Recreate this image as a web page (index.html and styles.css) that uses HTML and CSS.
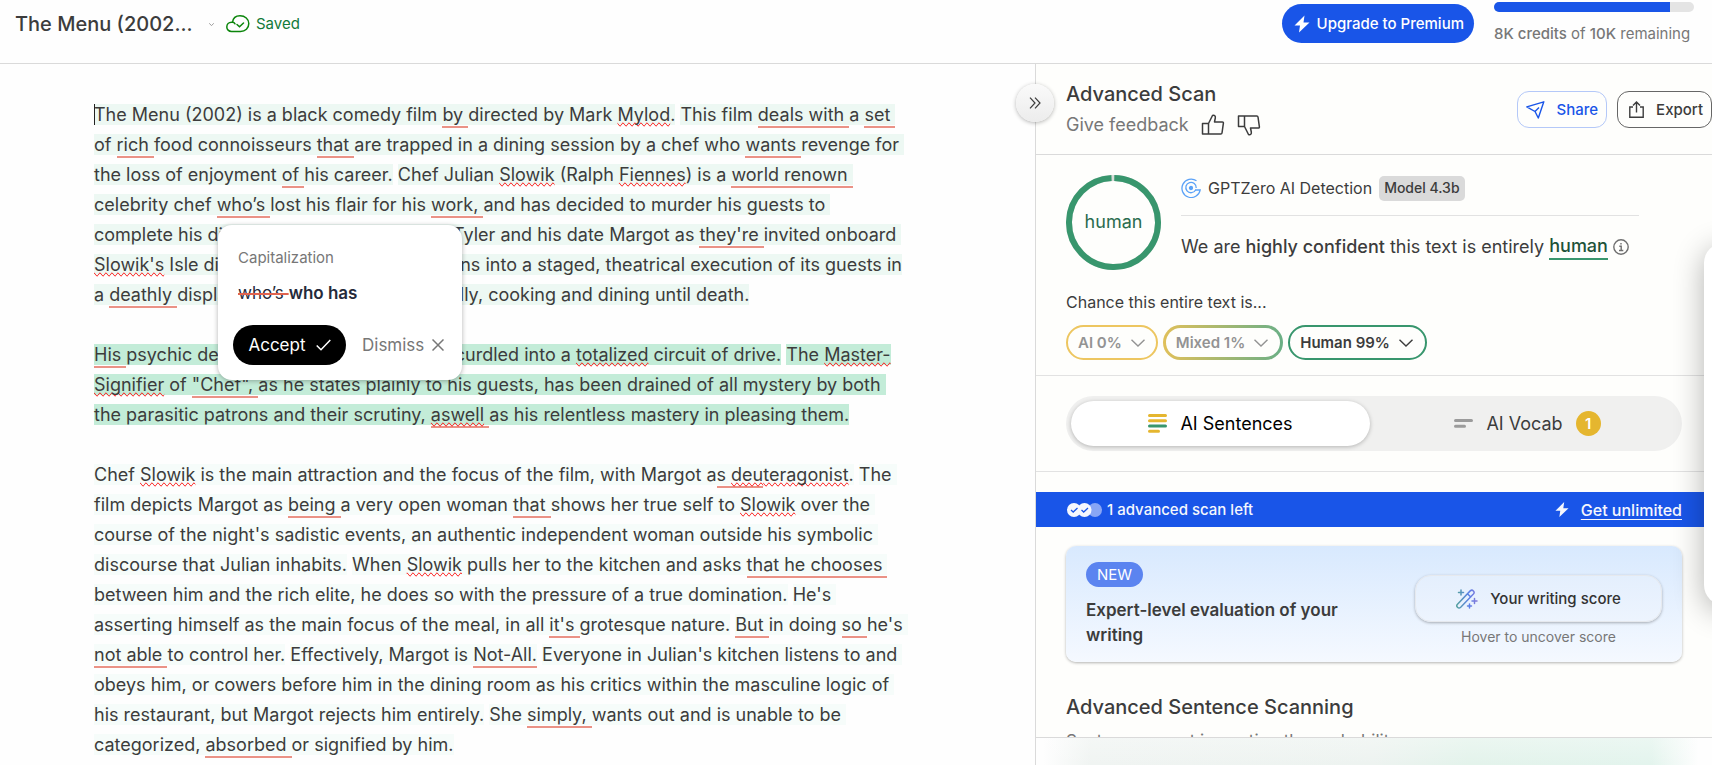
FILE: index.html
```html
<!DOCTYPE html>
<html lang="en">
<head>
    <meta charset="UTF-8">
    <meta name="viewport" content="width=device-width, initial-scale=1.0">
    <title>The Menu (2002)</title>
    <link rel="stylesheet" href="styles.css">
</head>
<body>
    <!-- shared icons -->
    <svg class="defs" width="0" height="0" aria-hidden="true">
        <symbol id="bolt" viewBox="0 0 16 18"><path fill="currentColor" d="M10.500 0.500 0.500 10.500h5.500L5 17.500 15.500 7.500H9.500z"/></symbol>
        <symbol id="chevron" viewBox="0 0 14 8"><path fill="none" stroke="currentColor" stroke-width="1.400" d="M0.500 0.700 7 7 13.500 0.700"/></symbol>
        <symbol id="thumb" viewBox="0 0 24 22"><path fill="none" stroke="currentColor" stroke-width="1.500" stroke-linejoin="round" d="M1.500 9.500h6V20h-6zM7.500 9.500 11.500 1.500c2-.8 3.200.6 2.800 2.500L13.500 8h7.800c.8 0 1.200.5 1.100 1.200L21 19c-.1.700-.6 1-1.200 1H7.500"/></symbol>
    </svg>

    <header class="topbar">
        <div class="doc">
            <h1>The Menu (2002...</h1>
            <svg class="caret" width="5" height="3"><use href="#chevron"/></svg>
            <span class="saved">
                <svg width="24" height="18" viewBox="0 0 24 18" fill="none" stroke="currentColor" stroke-width="1.500" stroke-linecap="round"><path d="M5.500 16.500C2.700 16.500.8 14.400.8 12c0-2.700 2-4.700 4.700-4.700h1C7 3.400 10 .8 14 .8c5 0 8.800 3.200 8.800 7.700 0 4.700-3.500 8-8.300 8zM6.500 7.300c1.200 0 2 .5 2.500 1.500M11 9.500l2.500 2.300L17.500 8"/></svg>
                Saved
            </span>
        </div>
        <div class="account">
            <button class="upgrade"><svg width="16" height="18"><use href="#bolt"/></svg>Upgrade to Premium</button>
            <div class="credits">
                <div class="meter"><div class="meter-fill"></div></div>
                <p><b>8K credits</b> of <b>10K</b> remaining</p>
            </div>
        </div>
    </header>

    <main>
        <article class="editor">
            <p class="focused"><mark class="light">The Menu (2002) is a black comedy film <u>by </u>directed by Mark <i>Mylod</i>.</mark> <mark class="light">This film <u>deals with </u>a <u>set </u>
of <u>rich </u>food connoisseurs <u>that </u>are trapped in a dining session by a chef who <u>wants </u>revenge for 
the loss of enjoyment <u>of </u>his career.</mark> <mark class="light">Chef Julian <i>Slowik</i> (Ralph <i>Fiennes</i>) is a <u>world renown </u>
celebrity chef <u>who’s </u>lost his flair for his <u>work, </u>and has decided to murder his guests to 
complete his dinner menu. The foodie fan Tyler and his date Margot as <u>they're </u>invited onboard 
<i>Slowik's</i> Isle dinner, the evening quickly turns into a staged, theatrical execution of its guests in
a <u>deathly </u>display of craft and prowess, finally, cooking and dining until death.</mark></p>
            <p><mark class="strong"><u>His </u>psychic desires for perfection have all curdled into a <i>totalized</i> circuit of drive.</mark> <mark class="strong">The <i>Master-</i>
<i>Signifier</i> of <u>"Chef", </u>as he states plainly to his guests, has been drained of all mystery by both 
the parasitic patrons and their scrutiny, <u><i>aswell</i> </u>as his relentless mastery in pleasing them.</mark></p>
            <p><mark class="faint">Chef <i>Slowik</i> is the main attraction and the focus of the film, with Margot a<u>s </u><u><i>deu</i></u><i>teragonist</i>.</mark> <mark class="faint">The 
film depicts Margot as <u>being </u>a very open woman <u>that </u>shows her true self to <i>Slowik</i> over the 
course of the night's sadistic events, an authentic independent woman outside his symbolic 
discourse that Julian inhabits.</mark> <mark class="faint">When <i>Slowik</i> pulls her to the kitchen and asks <u>that he chooses </u>
between him and the rich elite, he does so with the pressure of a true domination.</mark> <mark class="faint">He's 
asserting himself as the main focus of the meal, in all <u>it's </u>grotesque nature.</mark> <mark class="faint"><u>But </u>in doing <u>so </u>he's 
<u>not able </u>to control her.</mark> <mark class="faint">Effectively, Margot is <u>Not-All.</u></mark> <mark class="faint">Everyone in Julian's kitchen listens to and 
obeys him, or cowers before him in the dining room as his critics within the masculine logic of 
his restaurant, but Margot rejects him entirely.</mark> <mark class="faint">She <u>simply, </u>wants out and is unable to be 
categorized, <u>absorbed </u>or signified by him.</mark></p>

            <div class="suggestion">
                <span class="kind">Capitalization</span>
                <p class="fix"><del>who’s </del><strong>who has</strong></p>
                <div class="choices">
                    <button class="accept">Accept <svg width="15" height="12" viewBox="0 0 15 12" fill="none" stroke="currentColor" stroke-width="1.500"><path d="M.7 6.500 5 10.800 14.300 1"/></svg></button>
                    <button class="dismiss">Dismiss <svg width="12" height="12" viewBox="0 0 12 12" stroke="currentColor" stroke-width="1.500"><path d="M.5.5l11 11M11.500.5l-11 11"/></svg></button>
                </div>
            </div>
        </article>

        <aside class="panel">
            <button class="collapse" aria-label="Collapse panel"><svg width="12" height="12" viewBox="0 0 12 12" fill="none" stroke="currentColor" stroke-width="1.200"><path d="M1 .7 6 6 1 11.300M6 .7 11 6 6 11.300"/></svg></button>

            <div class="panel-head">
                <div>
                    <h2>Advanced Scan</h2>
                    <div class="feedback">
                        Give feedback
                        <button aria-label="Good"><svg width="24" height="22"><use href="#thumb"/></svg></button>
                        <button aria-label="Bad" class="down"><svg width="24" height="22"><use href="#thumb"/></svg></button>
                    </div>
                </div>
                <div class="actions">
                    <button class="share"><svg width="19" height="18" viewBox="0 0 19 18" fill="none" stroke="currentColor" stroke-width="1.400" stroke-linejoin="round"><path d="M.8 5.800 17.800.8 12.300 17 9 10.500zM9 10.500 13 6.500"/></svg>Share</button>
                    <button class="export"><svg width="15" height="17" viewBox="0 0 15 17" fill="none" stroke="currentColor" stroke-width="1.400"><path d="M4 6H.8v10.200h13.400V6H11M7.500 11.500V1.200M4 4.500l3.500-3.400L11 4.500"/></svg>Export</button>
                </div>
            </div>

            <section class="result">
                <div class="verdict">
                    <div class="ring">
                        <svg width="95" height="95" viewBox="0 0 95 95" fill="none" stroke-width="6"><circle cx="47.500" cy="47.500" r="44.500" stroke="#d9dcd9"/><circle cx="47.500" cy="47.500" r="44.500" stroke="#38966d" pathLength="100" stroke-dasharray="99 1" transform="rotate(-89 47.500 47.500)"/></svg>
                        <span>human</span>
                    </div>
                    <div class="summary">
                        <div class="source">
                            <svg width="20" height="20" viewBox="0 0 20 20" fill="none" stroke="#5ba2f7" stroke-width="1.300"><path d="M15.500 2.800A9.200 9.200 0 1 0 19.200 12H14"/><path d="M14.600 12A5.200 5.200 0 1 1 15.200 10"/><circle cx="10" cy="10" r="1.500" fill="#5ba2f7"/></svg>
                            GPTZero AI Detection
                            <span class="model">Model 4.3b</span>
                        </div>
                        <p>We are <b>highly confident</b> this text is entirely <b class="human">human</b><svg width="16" height="16" viewBox="0 0 16 16" fill="none" stroke="#6f6f6f" stroke-width="1.400"><circle cx="8" cy="8" r="7.200"/><path d="M6.300 7.300H8.200V11.500M6 11.500h4.300M7.300 4.700h1.400"/></svg></p>
                    </div>
                </div>
                <p class="chance">Chance this entire text is...</p>
                <div class="chips">
                    <button class="chip ai">AI 0% <svg width="14" height="8"><use href="#chevron"/></svg></button>
                    <button class="chip mixed">Mixed 1% <svg width="14" height="8"><use href="#chevron"/></svg></button>
                    <button class="chip person">Human 99% <svg width="14" height="8"><use href="#chevron"/></svg></button>
                </div>
            </section>

            <section class="switch">
                <div class="tabs">
                    <button class="tab active"><svg width="19" height="19" viewBox="0 0 19 19" stroke="#e5b62f" stroke-width="3" stroke-linecap="round"><path d="M1.500 1.500h16M1.500 6.800h16M1.500 17.200h9"/><path stroke="#38966d" d="M1.500 12h16"/></svg>AI Sentences</button>
                    <button class="tab"><svg width="19" height="9" viewBox="0 0 19 9" stroke="#9b9b9b" stroke-width="3" stroke-linecap="round"><path d="M1.500 1.500h16M1.500 7.200h9"/></svg>AI Vocab <span class="count">1</span></button>
                </div>
            </section>

            <div class="banner">
                <span class="left">
                    <svg width="35" height="14" viewBox="0 0 35 14"><circle cx="28" cy="7" r="7" fill="#89a6f5"/><circle cx="17.500" cy="7" r="7" fill="#f5f7fd"/><circle cx="7" cy="7" r="7" fill="#f5f7fd"/><path d="M4 7l2.200 2L10.500 5M14.500 7l2.200 2L21 5" fill="none" stroke="#1955e8" stroke-width="1.300"/></svg>
                    1 advanced scan left
                </span>
                <span class="more"><svg width="14" height="17"><use href="#bolt"/></svg><a href="#">Get unlimited</a></span>
            </div>

            <div class="promo">
                <div class="pitch">
                    <span class="new">NEW</span>
                    <h3>Expert-level evaluation of your writing</h3>
                </div>
                <div class="score">
                    <button><svg width="22" height="20" viewBox="0 0 22 20" fill="none" stroke="url(#wand)" stroke-width="1.500" stroke-linecap="round"><defs><linearGradient id="wand" gradientUnits="userSpaceOnUse" x1="0" y1="0" x2="22" y2="0"><stop stop-color="#55a39c"/><stop offset=".6" stop-color="#5b7fe8"/><stop offset="1" stop-color="#8a7ad6"/></linearGradient></defs><path d="M1.500 15.200 14.200 1.900c2.300-2 5.200 1 3.200 3.200L4.700 18.300c-2.300 2-5.200-1-3.200-3.100zM11.500 4.800l3.200 3.200M5 1v5M2.500 3.500h5M18.500 9.500v5M16 12h5M13.500 15v4M11.500 17h4"/></svg>Your writing score</button>
                    <small>Hover to uncover score</small>
                </div>
            </div>

            <section class="scanning">
                <h2>Advanced Sentence Scanning</h2>
                <p>Sentences most impacting the probability</p>
            </section>

            <footer class="panel-foot"></footer>
        </aside>
    </main>

    <div class="drawer"></div>
</body>
</html>
```

FILE: styles.css
```css
* {
    box-sizing: border-box;
}

html, body {
    height: 100%;
}

body {
    margin: 0;
    display: flex;
    flex-direction: column;
    overflow: hidden;
    position: relative;
    background: #fefefe;
    color: #3c3c3c;
    font: 14px/20px Inter, "Liberation Sans", sans-serif;
}

h1, h2, h3, p {
    margin: 0;
    font-weight: 500;
}

p {
    font-weight: 400;
}

button {
    display: inline-flex;
    align-items: center;
    justify-content: center;
    padding: 0;
    border: 0;
    background: none;
    color: inherit;
    font: inherit;
    white-space: nowrap;
}

b {
    font-weight: 500;
}

svg {
    flex: none;
}

.defs {
    position: absolute;
}

/* top bar */
.topbar {
    flex: none;
    display: flex;
    justify-content: space-between;
    height: 64px;
    padding: 0 16px 0 15px;
    border-bottom: 1px solid #dadada;
}

.doc {
    display: flex;
    align-items: center;
    height: 48px;
}

.doc h1 {
    width: 194px;
    font-size: 20px;
}

.caret {
    margin-right: 12px;
}

.saved {
    display: flex;
    align-items: center;
    gap: 6px;
    font-size: 15px;
    color: #137a3a;
}

.saved svg {
    color: #0b850b;
}

.account {
    display: flex;
    gap: 20px;
}

.upgrade {
    gap: 7px;
    height: 39px;
    margin-top: 4px;
    padding: 0 10px 0 12px;
    border-radius: 20px;
    background: #1955e8;
    color: #fff;
    font-size: 15px;
    font-weight: 500;
}

.credits {
    width: 202px;
    padding-top: 2px;
    font-size: 15px;
    color: #777;
}

.meter {
    width: 200px;
    height: 10px;
    margin-bottom: 12px;
    border-radius: 5px;
    background: #e4e4e4;
    overflow: hidden;
}

.meter-fill {
    width: 88%;
    height: 100%;
    background: #1955e8;
}

main {
    flex: 1;
    min-height: 0;
    display: grid;
    grid-template-columns: 1035fr 677fr;
}

/* document */
.editor {
    position: relative;
    padding: 36px 110px 0 94px;
    overflow: hidden;
}

.editor > p {
    margin-bottom: 30px;
    font-size: 18px;
    line-height: 30px;
    white-space: pre-wrap;
}

/* text cursor at the start of the document */
.focused::before {
    content: "";
    position: absolute;
    top: 40px;
    left: 94px;
    width: 1px;
    height: 21px;
    background: #222;
}

mark {
    color: inherit;
}

.light {
    background: #edf8f3;
}

.strong {
    background: #c3ecd8;
}

.faint {
    background: #f6fcfa;
}

.editor u {
    padding-bottom: 1px;
    border-bottom: 2px solid #ea9286;
    text-decoration: none;
}

.editor i {
    font-style: normal;
    text-decoration: spelling-error;
}

/* suggestion popup */
.suggestion {
    position: absolute;
    top: 161px;
    left: 218px;
    width: 244px;
    height: 155px;
    padding: 23px 15px 15px;
    border-radius: 14px;
    background: #fff;
    box-shadow: 0 1px 5px rgba(0, 0, 0, 0.3);
}

.kind {
    padding-left: 5px;
    font-size: 15px;
    color: #777;
}

.fix {
    margin: 13px 0 20px;
    padding-left: 5px;
    font-size: 17px;
    line-height: 24px;
    color: #252a3a;
}

.fix del {
    text-decoration: line-through #e0634f 2px;
}

.fix strong {
    font-weight: 600;
}

.choices {
    display: flex;
    gap: 16px;
    font-size: 17px;
}

.accept {
    gap: 10px;
    width: 113px;
    height: 40px;
    border-radius: 20px;
    background: #000;
    color: #fff;
}

.dismiss {
    gap: 8px;
    color: #777;
}

/* scan panel */
.panel {
    position: relative;
    display: flex;
    flex-direction: column;
    min-width: 0;
    border-left: 1px solid #dadada;
    background: #fefefc;
}

.collapse {
    position: absolute;
    top: 20px;
    left: -20px;
    width: 38px;
    height: 38px;
    border-radius: 50%;
    background: linear-gradient(#fafafa, #ececec);
    box-shadow: 0 1px 4px rgba(0, 0, 0, 0.3);
}

.panel-head {
    display: flex;
    justify-content: space-between;
    height: 91px;
    padding: 18px 0 0 30px;
    border-bottom: 1px solid #dadada;
}

.panel h2 {
    font-size: 20px;
    line-height: 24px;
}

.feedback {
    display: flex;
    align-items: center;
    gap: 12px;
    margin-top: 7px;
    font-size: 18px;
    line-height: 24px;
    color: #777;
}

.feedback button {
    color: #3c3c3c;
}

.down {
    transform: scaleY(-1);
}

.actions {
    display: flex;
    gap: 10px;
    margin-top: 9px;
}

.actions button {
    gap: 12px;
    height: 37px;
    padding: 0 8px;
    border: 1px solid #666;
    border-radius: 12px;
    font-size: 15px;
    font-weight: 500;
}

.actions .share {
    border-color: #b4c8f8;
    color: #1955e8;
}

.actions .export {
    padding: 0 8px 0 11px;
}

.result {
    height: 221px;
    padding: 20px 73px 0 30px;
    border-bottom: 1px solid #e2e2e2;
}

.verdict {
    display: flex;
    gap: 20px;
}

.ring {
    position: relative;
    width: 95px;
    height: 95px;
}

.ring span {
    position: absolute;
    inset: 0;
    text-align: center;
    font-size: 18px;
    line-height: 93px;
    color: #2a6c4e;
}

.summary {
    flex: 1;
    white-space: nowrap;
}

.source {
    display: flex;
    align-items: center;
    gap: 7px;
    height: 41px;
    padding-bottom: 14px;
    border-bottom: 1px solid #e2e2e2;
    font-size: 16px;
}

.model {
    padding: 2px 5px 3px;
    border-radius: 5px;
    background: #dadada;
    font-size: 14px;
    font-weight: 500;
}

.summary p {
    display: flex;
    align-items: center;
    margin-top: 18px;
    font-size: 18px;
    line-height: 24px;
    white-space: pre;
}

.summary p svg {
    margin-left: 5px;
}

.human {
    border-bottom: 2px solid #38966d;
    color: #1d5239;
}

.chance {
    margin-top: 22px;
    font-size: 16px;
}

.chips {
    display: flex;
    gap: 5px;
    margin-top: 13px;
}

.chip {
    gap: 9px;
    height: 35px;
    padding: 0 12px 0 10px;
    border: 2px solid #edc660;
    border-radius: 18px;
    font-size: 15px;
    font-weight: 600;
    color: #939393;
}

.ai {
    padding-right: 11px;
}

.mixed {
    border-width: 3px;
    border-color: transparent;
    background: linear-gradient(#fefefc, #fefefc) padding-box, linear-gradient(90deg, #e0c05a, #6aaf86) border-box;
}

.person {
    border-color: #38966d;
    color: #3c3c3c;
}

.switch {
    padding: 20px 30px;
    border-bottom: 1px solid #e2e2e2;
}

.tabs {
    display: flex;
    gap: 8px;
    height: 55px;
    padding: 5px;
    border-radius: 28px;
    background: #f0f0ef;
}

.tab {
    flex: 1;
    gap: 13px;
    border-radius: 23px;
    font-size: 18px;
}

.tab.active {
    background: #fff;
    color: #000;
    box-shadow: 0 1px 4px rgba(0, 0, 0, 0.25);
}

.count {
    width: 25px;
    height: 25px;
    border-radius: 50%;
    background: #e5b62f;
    color: #fff;
    font-size: 15px;
    font-weight: 600;
    line-height: 25px;
}

.banner {
    display: flex;
    align-items: center;
    justify-content: space-between;
    height: 35px;
    margin-top: 20px;
    padding: 0 30px 0 31px;
    background: #1955e8;
    color: #f5f7fd;
    font-size: 15px;
    font-weight: 500;
}

.left, .more {
    display: flex;
    align-items: center;
    gap: 5px;
}

.more {
    gap: 12px;
    font-size: 16px;
}

.more a {
    color: inherit;
    text-underline-offset: 3px;
}

.promo {
    display: flex;
    justify-content: space-between;
    height: 116px;
    margin: 19px 30px 0;
    padding: 16px 20px;
    border-radius: 10px;
    background: linear-gradient(#d8e9fe, #f5f9ff);
    box-shadow: 0 1px 3px rgba(0, 0, 0, 0.3);
}

.pitch {
    width: 280px;
}

.new {
    display: inline-block;
    height: 25px;
    padding: 0 11px;
    border-radius: 13px;
    background: #5b84f0;
    color: #fff;
    font-size: 15px;
    line-height: 25px;
}

.pitch h3 {
    margin-top: 11px;
    font-size: 17px;
    font-weight: 600;
    line-height: 25px;
}

.score {
    padding-top: 13px;
    text-align: center;
    color: #777;
}

.score button {
    display: flex;
    gap: 12px;
    width: 247px;
    height: 47px;
    margin-bottom: 5px;
    border: 1px solid #e6e9ee;
    border-radius: 16px;
    background: linear-gradient(#e4effd, #edf4fe);
    box-shadow: 0 1px 3px rgba(0, 0, 0, 0.3);
    color: #333;
    font-size: 15px;
    font-weight: 500;
}

.score small {
    font-size: 14px;
}

.scanning {
    padding: 33px 30px 0;
}

.scanning p {
    margin-top: 12px;
    font-size: 17px;
    color: #777;
}

.panel-foot {
    position: absolute;
    bottom: 0;
    left: 0;
    right: 0;
    height: 28px;
    border-top: 1px solid #dadada;
    background: linear-gradient(rgba(254, 254, 254, 0.3), transparent), linear-gradient(90deg, #fefefe 1%, #f0f4f2 8%, #edf3f0 50%, #e3f3eb 64%, #e3f4ed 91%, #fefefe 98%);
}

/* next panel peeking in from the right edge */
.drawer {
    position: absolute;
    top: 243px;
    right: -40px;
    width: 48px;
    height: 362px;
    border-radius: 20px;
    background: #fff;
    box-shadow: 0 6px 30px rgba(0, 0, 0, 0.3);
}
```
